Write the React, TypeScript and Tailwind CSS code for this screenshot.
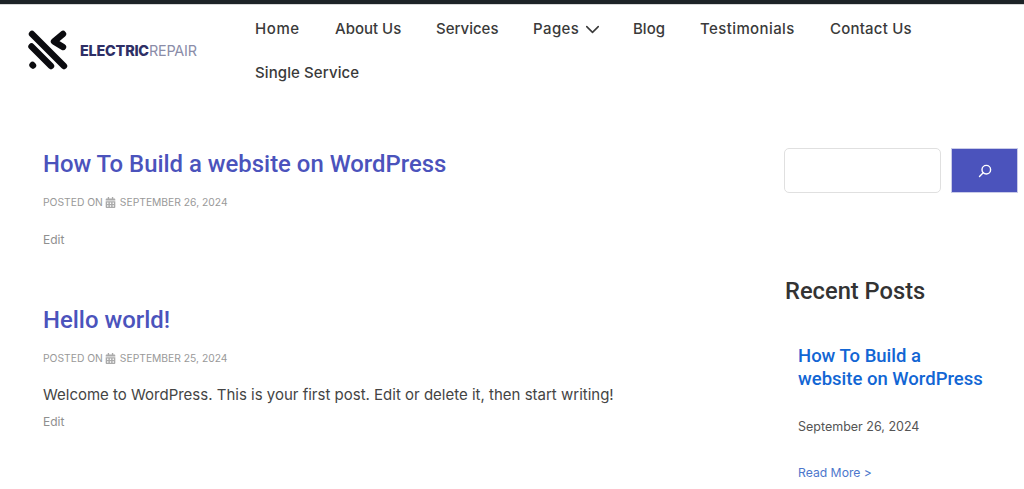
import { ChevronDown } from "lucide-react";
import { FaCalendarAlt } from "react-icons/fa";

const sans = "font-['Inter','Liberation_Sans',sans-serif]";
const head = "font-['Roboto','Liberation_Sans',sans-serif]";

const navItems = [
  { label: "Home", width: "w-[45px]", tracking: "tracking-[0.6px]" },
  { label: "About Us", width: "w-[66px]", tracking: "" },
  { label: "Services", width: "w-[62px]", tracking: "" },
  { label: "Pages", width: "w-[65px]", tracking: "tracking-[0.4px]", caret: true },
  { label: "Blog", width: "w-[32px]", tracking: "" },
  { label: "Testimonials", width: "w-[95px]", tracking: "tracking-[0.4px]" },
  { label: "Contact Us", width: "w-[82px]", tracking: "tracking-[0.2px]" },
  { label: "Single Service", width: "w-[104px]", tracking: "tracking-[0.1px]" },
];

function Logo() {
  return (
    <svg width="40" height="40" viewBox="0 0 40 40" className="shrink-0">
      <g stroke="#0b0b0f" strokeWidth="6.4" strokeLinecap="round" strokeLinejoin="round" fill="none">
        <path d="M4 4 L36 36" />
        <path d="M3.500 16.500 L23 36" />
        <path d="M4.500 35 L5 35.500" />
        <path d="M35 4 L26 11.500 L35 17" />
      </g>
    </svg>
  );
}

function PostMeta({ date }: { date: string }) {
  return (
    <div className="flex items-center text-[10.300px] leading-4 text-[#999999]">
      <span>POSTED ON</span>
      <FaCalendarAlt size={11} className="mx-[2px] text-[#aaaaaa]" />
      <span className="ml-[2px]">{date}</span>
    </div>
  );
}

export default function App() {
  return (
    <div className={`h-[489px] w-[1024px] overflow-hidden bg-white ${sans}`}>
      <div className="h-[5px] bg-[#1d2327] border-b border-[#d8d8d8]" />

      <header className="flex h-[95px]">
        <div className="flex w-[255px] shrink-0 items-start pl-[28px] pt-[25px]">
          <Logo />
          <div className="ml-[12px] mt-[13px] text-[14.400px] leading-4 tracking-[-0.2px]">
            <span className="font-extrabold text-[#2e2f66]">ELECTRIC</span>
            <span className="font-normal text-[#8a8ca8]">REPAIR</span>
          </div>
        </div>
        <nav className="flex w-[700px] flex-wrap content-start gap-x-[35px] pt-[2px]">
          {navItems.map((item) => (
            <a
              key={item.label}
              className={`flex h-[44px] items-center whitespace-nowrap text-[15px] font-medium text-[#3a3a3a] ${item.width} ${item.tracking}`}
            >
              {item.label}
              {item.caret && <ChevronDown size={23} strokeWidth={1.6} className="ml-[2px] shrink-0" />}
            </a>
          ))}
        </nav>
      </header>

      <main className="flex">
        <div className="w-[784px] shrink-0 pl-[43px] pt-[48px]">
          <article className="h-[156px]">
            <h2 className={`text-[23.900px] leading-[32px] font-medium text-[#4b53bc] ${head}`}>
              How To Build a website on WordPress
            </h2>
            <div className="mt-[14px]">
              <PostMeta date="SEPTEMBER 26, 2024" />
            </div>
            <div className="mt-[22px] text-[12px] leading-4 text-[#8f8f8f]">Edit</div>
          </article>
          <article>
            <h2 className={`text-[23.900px] leading-[32px] font-medium text-[#4b53bc] ${head}`}>
              Hello world!
            </h2>
            <div className="mt-[14px]">
              <PostMeta date="SEPTEMBER 25, 2024" />
            </div>
            <p className="mt-[19px] text-[15px] leading-5 text-[#444444]">
              Welcome to WordPress. This is your first post. Edit or delete it, then start writing!
            </p>
            <div className="mt-[9px] text-[12px] leading-4 text-[#8f8f8f]">Edit</div>
          </article>
        </div>

        <aside className="flex-1 pt-[48px]">
          <div className="flex">
            <div className="h-[45px] w-[157px] rounded-[5px] border border-[#e0e0e0] bg-white" />
            <div className="ml-[10px] flex h-[45px] w-[67px] items-center justify-center border border-[#c9cbe8] bg-[#4b53bc]">
              <svg width="14" height="14" viewBox="0 0 14 14" fill="none" stroke="#ffffff" strokeWidth="1.400">
                <circle cx="8.300" cy="5.700" r="4.300" />
                <path d="M5.200 8.800 L1.500 12.500" strokeLinecap="round" />
              </svg>
            </div>
          </div>
          <h2 className={`ml-px mt-[82px] text-[23.700px] leading-[32px] font-medium text-[#333333] ${head}`}>
            Recent Posts
          </h2>
          <div className="pl-[14px] pt-[38px]">
            <h3 className={`text-[18.500px] leading-[23px] font-medium text-[#1266d4] ${head}`}>
              How To Build a<br />website on WordPress
            </h3>
            <div className="mt-[28px] text-[12.500px] leading-4 text-[#555555]">September 26, 2024</div>
            <div className="mt-[30px] text-[12.200px] leading-4 text-[#4d77cc]">Read More &gt;</div>
          </div>
        </aside>
      </main>
    </div>
  );
}
